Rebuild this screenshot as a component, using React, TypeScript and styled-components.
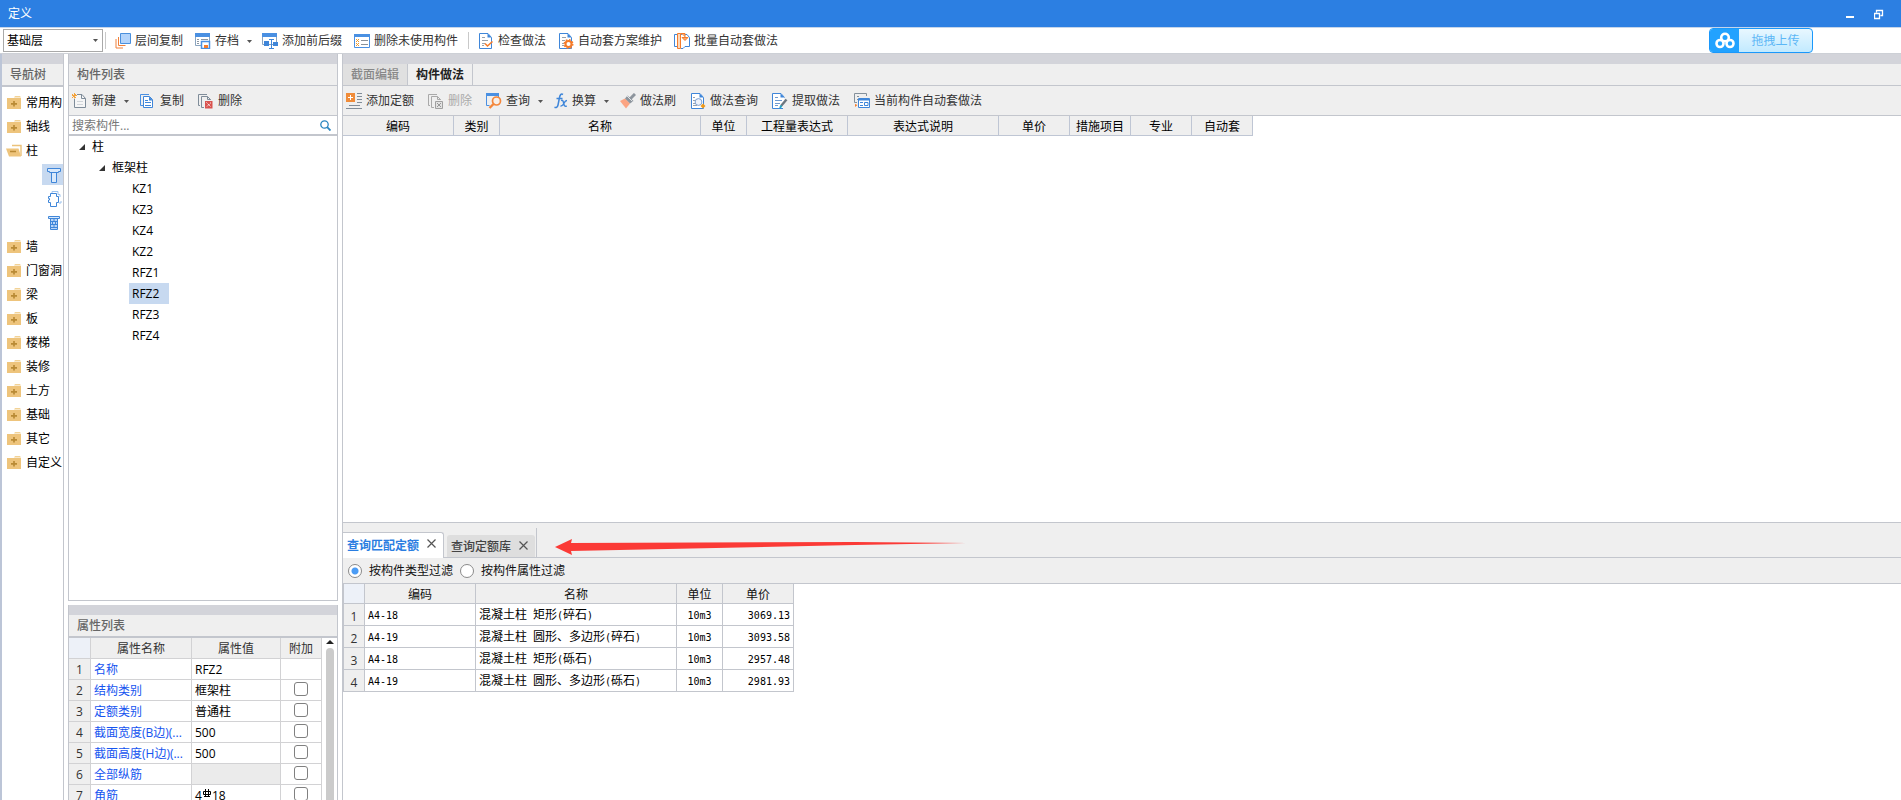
import React, { useState } from 'react';
import styled, { createGlobalStyle, css } from 'styled-components';

const line = '#c3c6cd';
const uiFont = '"Open Sans", "Noto Sans CJK SC", sans-serif';

const GlobalStyle = createGlobalStyle`
  * { box-sizing: border-box; }
  html, body, #root { height: 100%; }
  body {
    margin: 0;
    overflow: hidden;
    background: #fff;
    color: #111;
    font: 12px/16px ${uiFont};
  }
  button, input, select { font: inherit; color: inherit; }
  button { border: 0; margin: 0; padding: 0; background: none; white-space: nowrap; }
`;

/* ---------- layout ---------- */

const Page = styled.div`
  display: flex;
  flex-direction: column;
  height: 100vh;
`;

const TitleBar = styled.header`
  display: flex;
  align-items: center;
  justify-content: space-between;
  height: 28px;
  flex: none;
  padding: 0 13px 0 8px;
  background: #2c7fe2;
  border-bottom: 1px solid #c5d5ea;
  color: #fff;
`;

const WindowButtons = styled.div`
  display: flex;
  gap: 14px;
`;

const WindowButton = styled.button`
  display: flex;
  width: 14px;
  height: 14px;
`;

const TopToolbar = styled.div`
  display: flex;
  align-items: center;
  height: 26px;
  flex: none;
  padding: 0 88px 0 3px;
  background: #fff;
  border-bottom: 1px solid #cdd0d6;
`;

const Workspace = styled.div`
  display: flex;
  flex: 1;
  min-height: 0;
  border-left: 2px solid #bcc5d7;
`;

const NavPanel = styled.nav`
  width: 62px;
  flex: none;
  margin-right: 4px;
  border-right: 1px solid ${line};
  overflow: hidden;
`;

const SideColumn = styled.div`
  display: flex;
  flex-direction: column;
  width: 270px;
  flex: none;
  margin-right: 4px;
`;

const SidePanel = styled.section<{ $share: number }>`
  display: flex;
  flex-direction: column;
  flex: ${(p) => p.$share} 1 0;
  min-height: 0;
  overflow: hidden;
  border: 1px solid ${line};
  border-top: 0;
  & + & {
    margin-top: 4px;
    border-bottom: 0;
  }
`;

const MainColumn = styled.main`
  display: flex;
  flex-direction: column;
  flex: 1;
  min-width: 0;
  border-left: 1px solid ${line};
`;

const MainPane = styled.section<{ $share: number }>`
  display: flex;
  flex-direction: column;
  flex: ${(p) => p.$share} 1 0;
  min-height: 0;
  overflow: hidden;
`;

const Strip = styled.div`
  height: 10px;
  flex: none;
  background: #d3d4da;
`;

const PanelHeader = styled.h2<{ $rule: number }>`
  height: ${(p) => 21 + p.$rule}px;
  flex: none;
  margin: 0;
  padding: 0 8px;
  background: #efefef;
  border-bottom: ${(p) => p.$rule}px solid ${line};
  color: #666;
  font-size: 12px;
  font-weight: 500;
  line-height: 21px;
  white-space: nowrap;
`;

/* ---------- toolbars ---------- */

const FloorPicker = styled.div`
  position: relative;
  margin-right: 2px;
`;

const FloorSelect = styled.select`
  display: block;
  width: 100px;
  height: 23px;
  padding: 0 3px;
  appearance: none;
  background: #fff;
  border: 1px solid #a9a9a9;
  border-radius: 0;
  color: #000;
`;

const FloorCaret = styled.span`
  position: absolute;
  right: 5px;
  top: 10px;
  display: flex;
  pointer-events: none;
`;

const Divider = styled.i<{ $before?: number }>`
  width: 1px;
  height: 17px;
  margin: 0 3px 0 ${(p) => p.$before ?? 0}px;
  background: #c9c9c9;
`;

const ToolButton = styled.button<{ $pad: number; $menu?: boolean }>`
  display: flex;
  align-items: center;
  gap: 4px;
  height: 22px;
  padding: 0 ${(p) => (p.$menu ? 4 : p.$pad)}px 0 ${(p) => p.$pad}px;
  color: #333;
  &:disabled { color: #aaa; }
`;

const CaretSlot = styled.span`
  display: flex;
  padding: 2px 0 0 4px;
`;

const PanelToolbar = styled.div`
  display: flex;
  align-items: center;
  height: 30px;
  flex: none;
  background: #efefef;
  border-bottom: 1px solid ${line};
  > button:first-child { padding-left: 3px; }
`;

const UploadButton = styled.button`
  display: flex;
  width: 104px;
  height: 25px;
  margin-left: auto;
  overflow: hidden;
  border: 1px solid #1a98fb;
  border-radius: 4px;
  background: linear-gradient(#e8f7ff, #c2eaff);
  color: #5cb7f6;
  line-height: 23px;
`;

const UploadLogo = styled.span`
  display: flex;
  align-items: center;
  justify-content: center;
  width: 29px;
  height: 23px;
  background: #22a2ff;
`;

const UploadText = styled.span`
  flex: 1;
  text-align: center;
`;

/* ---------- navigation and tree ---------- */

const NavList = styled.ul`
  margin: 0;
  padding: 4px 0 0;
  list-style: none;
`;

const NavItem = styled.li`
  display: flex;
  flex-direction: column;
`;

const NavButton = styled.button`
  display: flex;
  align-items: center;
  gap: 4px;
  height: 24px;
  padding-left: 4px;
  color: #000;
`;

const NavTool = styled.button<{ $on?: boolean }>`
  display: flex;
  align-items: center;
  justify-content: center;
  width: 21px;
  height: 21px;
  margin: 1px 0 2px 40px;
  padding-left: 3px;
  background: ${(p) => (p.$on ? '#c7d9f0' : 'transparent')};
`;

const SearchRow = styled.label`
  display: flex;
  align-items: center;
  height: 20px;
  flex: none;
  padding: 0 6px 0 3px;
  border-bottom: 2px solid ${line};
`;

const SearchInput = styled.input`
  flex: 1;
  min-width: 0;
  height: 18px;
  padding: 0;
  border: 0;
  outline: 0;
  background: none;
  &::placeholder { color: #777; opacity: 1; }
`;

const TreeItem = styled.div<{ $indent: number }>`
  display: flex;
  align-items: center;
  height: 21px;
  padding-left: ${(p) => p.$indent}px;
`;

const TreeLabel = styled.button<{ $selected?: boolean; $leaf?: boolean }>`
  height: 21px;
  padding: 0 ${(p) => (p.$leaf ? 10 : 5)}px 0 ${(p) => (p.$leaf ? 3 : 7)}px;
  color: #000;
  background: ${(p) => (p.$selected ? '#c7d9f0' : 'transparent')};
`;

/* ---------- tables ---------- */

const Col = styled.col<{ $w: number }>`
  width: ${(p) => p.$w}px;
`;

const tableBase = css`
  table-layout: fixed;
  border-collapse: separate;
  border-spacing: 0;
  flex: none;
  align-self: flex-start;
  th, td {
    padding: 2px 0 0;
    overflow: hidden;
    white-space: nowrap;
    font-weight: 400;
    border-right: 1px solid ${line};
    border-bottom: 1px solid ${line};
  }
  thead th { background: #efefef; text-align: center; }
`;

const MethodTable = styled.table`
  ${tableBase}
  width: 910px;
  th { height: 20px; border-color: #bfc6d4; color: #000; }
`;

const QuotaTable = styled.table`
  ${tableBase}
  width: 451px;
  border-left: 1px solid ${line};
  thead th { height: 20px; color: #111; }
  thead th:first-child { background: #edf1f8; }
  tbody th { background: #efefef; color: #333; padding-top: 4px; }
  td, tbody th { height: 22px; }
  td { padding: 2px 3px 0; color: #000; }
`;

const PropertyTable = styled.table`
  ${tableBase}
  width: 253px;
  th, td { height: 21px; border-color: #d2d2d4; }
  thead th { color: #333; }
  thead th:first-child { background: #edf1f8; }
  tbody th { background: #efefef; color: #333; }
  td { padding: 2px 3px 0; }
`;

const PropertyBody = styled.div`
  display: flex;
  flex: 1;
  min-height: 0;
`;

const NameCell = styled.td`
  color: #1554f0;
`;

const ValueCell = styled.td<{ $locked?: boolean }>`
  color: #000;
  background: ${(p) => (p.$locked ? '#ebebeb' : '#fff')};
`;

const CheckBox = styled.input`
  display: block;
  width: 14px;
  height: 14px;
  margin: 0 auto 4px;
  appearance: none;
  background: #fff;
  border: 1px solid #808080;
  border-radius: 3px;
  &:checked { background: #5aa2f5; }
`;

const ScrollTrack = styled.div`
  display: flex;
  flex-direction: column;
  align-items: center;
  gap: 4px;
  flex: 1;
  padding-top: 2px;
`;

const ScrollThumb = styled.div`
  width: 8px;
  flex: 1;
  border-radius: 4px 4px 0 0;
  background: #cbcbcb;
`;

const HalfWidth = styled.span`
  font: 10px/16px "DejaVu Sans Mono", monospace;
`;

const Cell = styled.td<{ $align?: string }>`
  text-align: ${(p) => p.$align ?? 'left'};
`;

/* ---------- tabs ---------- */

const TabBar = styled.div`
  display: flex;
  height: 22px;
  flex: none;
  background: #efefef;
  border-bottom: 1px solid ${line};
`;

const Tab = styled.button<{ $active?: boolean }>`
  width: 65px;
  border-right: 1px solid ${line};
  background: ${(p) => (p.$active ? '#efefef' : '#e0e0e0')};
  color: ${(p) => (p.$active ? '#222' : '#888')};
  font-weight: ${(p) => (p.$active ? 700 : 500)};
`;

const QueryTabBar = styled.div`
  position: relative;
  display: flex;
  align-items: flex-end;
  height: 36px;
  flex: none;
  background: #efefef;
  border-top: 1px solid ${line};
`;

const QueryTab = styled.div<{ $active?: boolean }>`
  display: flex;
  align-items: center;
  justify-content: space-between;
  flex: none;
  ${(p) =>
    p.$active
      ? css`
          width: 101px;
          height: 26px;
          padding: 0 7px 0 4px;
          background: #fff;
          border: 1px solid ${line};
          border-width: 1px 1px 0 0;
          border-radius: 0 3px 0 0;
          color: #2a7de1;
          font-weight: 700;
        `
      : css`
          width: 88px;
          height: 22px;
          padding: 2px 7px 0 4px;
          background: #dedede;
          border-radius: 3px 3px 0 0;
          color: #444;
          font-weight: 500;
        `}
`;

const InactiveTabs = styled.div`
  display: flex;
  align-items: flex-end;
  height: 30px;
  padding: 0 1px 0 3px;
  border-right: 1px solid ${line};
  border-bottom: 1px solid ${line};
`;

const TabFill = styled.div`
  flex: 1;
  height: 30px;
  border-bottom: 1px solid ${line};
`;

const CloseButton = styled.button`
  display: flex;
  padding-bottom: 4px;
`;

const Annotation = styled.svg`
  position: absolute;
  left: 212px;
  top: 14px;
  pointer-events: none;
`;

const FilterRow = styled.div`
  display: flex;
  align-items: center;
  gap: 7px;
  height: 26px;
  flex: none;
  padding-left: 5px;
  background: #efefef;
  border-bottom: 1px solid ${line};
  color: #111;
`;

const FilterOption = styled.label`
  display: flex;
  align-items: center;
  gap: 7px;
`;

const Radio = styled.input`
  width: 14px;
  height: 14px;
  margin: 0;
  appearance: none;
  border: 1px solid #8a8a8a;
  border-radius: 50%;
  background: #fff;
  &:checked { background: radial-gradient(circle, #4b9cf5 3px, #fff 4px); }
`;

/* ---------- icons ---------- */

const Svg = ({ children, w = 16, h = 16 }: { children: React.ReactNode; w?: number; h?: number }) => (
  <svg width={w} height={h} viewBox={`0 0 ${w} ${h}`} fill="none" aria-hidden="true">
    {children}
  </svg>
);

const Caret = () => (
  <Svg w={5} h={3}><path d="M0 0h5L2.500 3z" fill="#555" /></Svg>
);

const docPath = 'M1.500.5h8.500l3.500 4v11h-12z';

const icons: Record<string, React.ReactNode> = {
  layers: (
    <Svg>
      <path d="M1 6v9h7" stroke="#f0803a" />
      <path d="M3.500 4v8.500h7" stroke="#f0803a" />
      <path d="M5.500.5h10v10h-10z" fill="#b3d4fb" stroke="#4a90dd" />
    </Svg>
  ),
  archive: (
    <Svg>
      <path d="M.5 1h14v11.500h-14z" fill="#fff" stroke="#8aa4bf" />
      <path d="M0 0h15v4H0z" fill="#4a90e2" />
      <path d="M2 6.500h2M2 8.500h2M2 10.500h2M6 6.500h7" stroke="#8b97a3" />
      <path d="M6.500 8.500h8v7h-8z" fill="#fff" stroke="#4a90e2" strokeWidth="1.500" />
      <path d="M9 12h4v3H9z" fill="#f57c2b" />
    </Svg>
  ),
  affix: (
    <Svg>
      <path d="M.5 1h14v10.500h-14z" fill="#fff" stroke="#8aa4bf" />
      <path d="M0 0h15v4H0z" fill="#4a90e2" />
      <path d="M2 8h5v5H2zM11 9h5v4h-5z" fill="#3f86d9" />
      <path d="M9.500 7v8.500M7 6.500h5M7 15.500h5" stroke="#3f86d9" />
    </Svg>
  ),
  unused: (
    <Svg>
      <path d="M.5 1.500h15v13H.5z" fill="#fff" stroke="#4a90e2" />
      <path d="M0 1h16v3H0z" fill="#4a90e2" />
      <path d="M2 6l3 3M5 6L2 9M2 10l3 3M5 10l-3 3" stroke="#ef9a2c" />
      <path d="M7 7.500h7M7 11.500h7" stroke="#8a9199" />
    </Svg>
  ),
  check: (
    <Svg>
      <path d={docPath} fill="#fff" stroke="#3f86d9" />
      <path d="M9.500.5v4h4z" fill="#3f86d9" />
      <path d="M4 4.500h3M4 7.500h6M4 10.500h3M4 12.500h2" stroke="#98a2ad" />
      <path d="M7 10.500l2.500 2.500L14.500 8.500" stroke="#f57c2b" strokeWidth="1.600" />
    </Svg>
  ),
  plan: (
    <Svg>
      <path d={docPath} fill="#fff" stroke="#3f86d9" />
      <path d="M9.500.5v4h4z" fill="#3f86d9" />
      <path d="M4 4.500h4M4 7.500h3M4 10.500h2M4 12.500h2" stroke="#98a2ad" />
      <circle cx="10.500" cy="11" r="3" fill="#fff" stroke="#f57c2b" strokeWidth="2" />
      <circle cx="10.500" cy="11" r="4.300" stroke="#f57c2b" strokeWidth="1.400" strokeDasharray="1.700 1.677" />
    </Svg>
  ),
  batch: (
    <Svg>
      <path d="M3.500 1.500h-3v12h3M5 1.500h8l2.500 3V13.500H11l-2 2H7" fill="#fff" stroke="#3f86d9" />
      <path d="M3.500.5h3v15h-3z" fill="#fbd9bd" stroke="#f57c2b" />
      <path d="M6.500.5h4.500V4M8 4.500l3 3 3-3z" stroke="#f57c2b" fill="#f9a86f" />
    </Svg>
  ),
  create: (
    <Svg>
      <path d="M5 1.500h5l3.500 4v9h-11V6" fill="#f6f6f6" stroke="#7f8c99" />
      <path d="M9.500 1.500v4h4" stroke="#7f8c99" />
      <path d="M5 8.500h6M5 11.500h6" stroke="#d0d4d8" />
      <path d="M0 1l4 4M4 1L0 5M2.500 0v5.500M0 2.500h5" stroke="#f3a23a" />
    </Svg>
  ),
  copy: (
    <Svg>
      <path d="M3 12.500H.5V1.500H9" stroke="#4a90e2" />
      <path d="M3.500 3.500h6l3 3v8h-9z" fill="#fff" stroke="#3f86d9" />
      <path d="M9 3.500v4h4z" fill="#3f86d9" />
      <path d="M5 7.500h3M5 9.500h6M5 12.500h6" stroke="#3f86d9" />
    </Svg>
  ),
  remove: (
    <Svg>
      <path d="M2 12.500H.5V1.500H9" stroke="#7f8c99" />
      <path d="M6 14.500H3.500v-11h6l3 3V7M9.500 3.500v3h3" stroke="#7f8c99" />
      <path d="M7 8h7.500v7.500H7z" fill="#d9534f" />
      <path d="M8.500 9.500l4.500 4.500M13 9.500L8.500 14" stroke="#fff" strokeDasharray="1.200 .8" />
    </Svg>
  ),
  removeOff: (
    <Svg>
      <path d="M2 12.500H.5V1.500H9" stroke="#a9a9a9" />
      <path d="M6 14.500H3.500v-11h6l3 3V7M9.500 3.500v3h3" stroke="#a9a9a9" />
      <path d="M7.500 8.500h7v7h-7z" fill="#e2e2e2" stroke="#a0a0a0" />
      <path d="M9 10l4 4M13 10l-4 4" stroke="#999" />
    </Svg>
  ),
  addQuota: (
    <Svg>
      <path d="M0 0h9v9H0z" fill="#f08c3a" />
      <path d="M4.500 2v5M2 4.500h5" stroke="#fff" />
      <path d="M11 .5h5M11 3.500h5M11 6.500h5M11 9.500h5M3 12.500h11M0 15.500h16" stroke="#808d99" />
    </Svg>
  ),
  query: (
    <Svg>
      <path d="M.5 1v11.500h3M12.500 1v3" stroke="#4a90e2" />
      <path d="M0 0h13v3H0z" fill="#4a90e2" />
      <circle cx="10.500" cy="8" r="4" stroke="#f4863a" strokeWidth="1.700" fill="#f7efe8" />
      <path d="M7.500 11l-4 4" stroke="#f4863a" strokeWidth="2.400" />
    </Svg>
  ),
  convert: (
    <Svg w={14}>
      <path d="M9 1.500C7 .3 6 2 5.500 4.500L4 12c-.4 2-1.500 3-3.500 2.300M2.500 5.500h6" stroke="#3f86d9" strokeWidth="1.500" />
      <path d="M7 7.500c2-.8 2.300 1 2.700 3s1 3.500 3 2.500M13 7.500c-2 0-2.600 2-3.500 3.500s-1.500 2.300-3 2" stroke="#3f86d9" strokeWidth="1.400" />
    </Svg>
  ),
  brush: (
    <Svg>
      <path d="M0 8l5-2.500 5 5L6 15.500z" fill="#fba482" />
      <path d="M5 5.500l2.500-3 6 5.500-3.500 2.500z" fill="#8d959d" />
      <path d="M10 6l5-5" stroke="#8d959d" strokeWidth="3" />
      <path d="M7 3l5.500 5.500" stroke="#dfe3e6" />
    </Svg>
  ),
  methodQuery: (
    <Svg>
      <path d={docPath} fill="#fff" stroke="#3f86d9" />
      <path d="M9.500.5v4h4z" fill="#3f86d9" />
      <path d="M3 4.500h2M3 7.500h2M3 10.500h2M3 12.500h4" stroke="#98a2ad" />
      <circle cx="8.500" cy="9" r="3.400" stroke="#7c9fd0" fill="#eef3fb" />
      <path d="M13 10.500l2.500 2.500-2.500 2.500-2.500-2.500z" fill="#f09a1a" />
    </Svg>
  ),
  extract: (
    <Svg>
      <path d="M11 15.500H.5V.5h8.500l3.500 4" fill="#fff" stroke="#3f86d9" />
      <path d="M8.500.5v4h4z" fill="#3f86d9" />
      <path d="M3 4.500h3M3 7.500h7M3 10.500h5M3 12.500h3" stroke="#6f9bd0" />
      <path d="M14.500 6.500L9 13" stroke="#6d7780" strokeWidth="2.400" />
      <path d="M8 15l1.500-2.500" stroke="#25a5c4" strokeWidth="2" />
    </Svg>
  ),
  autoApply: (
    <Svg>
      <path d="M3 9.500H.5V.5h12V3M3 3.500h2M3 6.500h1" stroke="#84909b" />
      <path d="M1 11l2.500 1L1 14z" fill="#f57c2b" />
      <path d="M4.500 5.500h11v9h-11z" fill="#fff" stroke="#3f86d9" />
      <path d="M5 6.500h10" stroke="#3f86d9" strokeWidth="2" />
      <path d="M6 9.500h3M6 12.500h3M10.500 9.500h3.500v3h-3.500z" stroke="#3f86d9" />
    </Svg>
  ),
};

const FolderIcon = ({ open }: { open?: boolean }) =>
  open ? (
    <Svg>
      <path d="M6 2.500h9V13" stroke="#ecc27a" strokeWidth="1.400" />
      <path d="M0 5.500h12.500l2.500 8H3z" fill="#eec47c" />
      <path d="M4 8.500h6" stroke="#b98a35" strokeWidth="1.500" />
    </Svg>
  ) : (
    <Svg>
      <path d="M8 2.500L9 1h5l1 1.500z" fill="#f2d296" />
      <path d="M1 3h14v11H1z" fill="#eec47c" />
      <path d="M8 6v5.500M5 8.800h6" stroke="#b98a35" strokeWidth="1.700" />
    </Svg>
  );

const navTools = [
  <Svg key="column">
    <path d="M1.500 1.500h13v3h-2v1h-9v-1h-2zM5.500 5.500h5v10h-5z" fill="#d9e9fb" stroke="#3f86d9" />
  </Svg>,
  <Svg key="structural">
    <path d="M6 2.500V.5h6v3h2V6M15 10v2h-2" stroke="#9cc2ee" />
    <path d="M4.500 2.500h6v3h2v6h-2v4h-6v-4h-2V9h1V7.500h-1v-2h2z" fill="#fff" stroke="#3f86d9" />
  </Svg>,
  <Svg key="masonry">
    <path d="M2.500 1.500h11v2h-11z" fill="#d9e9fb" stroke="#3f86d9" />
    <path d="M4.500 4v10.500h7V4M4.500 6.500h7M4.500 9.500h7M4.500 12.500h7M8 4v2.500M6.500 6.500v3M9.500 6.500v3M8 9.500v3" fill="#b9d5f6" stroke="#3f86d9" />
  </Svg>,
];

const CloseIcon = () => (
  <Svg w={9} h={9}><path d="M.5.5l8 8M8.500.5l-8 8" stroke="#555" strokeWidth="1.200" /></Svg>
);

const RebarMark = () => (
  <svg width="10" height="12" viewBox="0 0 10 12" fill="none" role="img" aria-label="钢筋直径">
    <path d="M1.500 3.500h7v3h-7zM3.500 1v8M6.500 1v8M2 8.500h6" stroke="#000" />
  </svg>
);

/* ---------- data ---------- */

type Tool = { icon: string; label: string; menu?: boolean; off?: boolean };

const fileTools: Tool[] = [
  { icon: 'layers', label: '层间复制' },
  { icon: 'archive', label: '存档', menu: true },
  { icon: 'affix', label: '添加前后缀' },
  { icon: 'unused', label: '删除未使用构件' },
];
const autoTools: Tool[] = [
  { icon: 'check', label: '检查做法' },
  { icon: 'plan', label: '自动套方案维护' },
  { icon: 'batch', label: '批量自动套做法' },
];
const listTools: Tool[] = [
  { icon: 'create', label: '新建', menu: true },
  { icon: 'copy', label: '复制' },
  { icon: 'remove', label: '删除' },
];
const methodTools: Tool[] = [
  { icon: 'addQuota', label: '添加定额' },
  { icon: 'removeOff', label: '删除', off: true },
  { icon: 'query', label: '查询', menu: true },
  { icon: 'convert', label: '换算', menu: true },
  { icon: 'brush', label: '做法刷' },
  { icon: 'methodQuery', label: '做法查询' },
  { icon: 'extract', label: '提取做法' },
  { icon: 'autoApply', label: '当前构件自动套做法' },
];

const navItems = ['常用构', '轴线', '柱', '墙', '门窗洞', '梁', '板', '楼梯', '装修', '土方', '基础', '其它', '自定义'];
const members = ['KZ1', 'KZ3', 'KZ4', 'KZ2', 'RFZ1', 'RFZ2', 'RFZ3', 'RFZ4'];

const methodColumns: [string, number][] = [
  ['编码', 111], ['类别', 46], ['名称', 201], ['单位', 46], ['工程量表达式', 101],
  ['表达式说明', 151], ['单价', 71], ['措施项目', 61], ['专业', 61], ['自动套', 61],
];

const properties: { name: string; value: React.ReactNode; check?: boolean; locked?: boolean }[] = [
  { name: '名称', value: 'RFZ2' },
  { name: '结构类别', value: '框架柱', check: true },
  { name: '定额类别', value: '普通柱', check: true },
  { name: '截面宽度(B边)(...', value: '500', check: true },
  { name: '截面高度(H边)(...', value: '500', check: true },
  { name: '全部纵筋', value: '', check: true, locked: true },
  { name: '角筋', value: <>4<RebarMark />18</>, check: true },
];

const quotas = [
  ['A4-18', '混凝土柱 矩形(碎石)', '10m3', '3069.13'],
  ['A4-19', '混凝土柱 圆形、多边形(碎石)', '10m3', '3093.58'],
  ['A4-18', '混凝土柱 矩形(砾石)', '10m3', '2957.48'],
  ['A4-19', '混凝土柱 圆形、多边形(砾石)', '10m3', '2981.93'],
];

/* ---------- components ---------- */

const Tools = ({ items, pad = 6 }: { items: Tool[]; pad?: number }) => (
  <>
    {items.map((t) => (
      <ToolButton key={t.label} $pad={pad} $menu={t.menu} disabled={t.off}>
        {icons[t.icon]}
        {t.label}
        {t.menu && <CaretSlot><Caret /></CaretSlot>}
      </ToolButton>
    ))}
  </>
);

/* Latin runs take half the width of a Chinese character. */
const GridText = ({ text }: { text: string }) => (
  <>
    {text.split(/([\x20-\x7e]+)/).map((part, i) => (i % 2 ? <HalfWidth key={i}>{part}</HalfWidth> : part))}
  </>
);

const Expander = () => (
  <Svg w={6} h={6}><path d="M6 0v6H0z" fill="#333" /></Svg>
);

export default function App() {
  const [selected, setSelected] = useState('RFZ2');
  const [filter, setFilter] = useState('type');

  return (
    <Page>
      <GlobalStyle />
      <TitleBar>
        <span>定义</span>
        <WindowButtons>
          <WindowButton aria-label="最小化">
            <Svg w={14} h={14}><path d="M0 10h8" stroke="#fff" strokeWidth="2" /></Svg>
          </WindowButton>
          <WindowButton aria-label="还原">
            <Svg w={14} h={14}>
              <path d="M2.500 5.500v-2h6v5h-2M.5 6.500h5v5h-5zM2 3.500h7M0 6.500h6" stroke="#fff" strokeWidth="1.300" />
            </Svg>
          </WindowButton>
        </WindowButtons>
      </TitleBar>

      <TopToolbar>
        <FloorPicker>
          <FloorSelect aria-label="楼层"><option>基础层</option></FloorSelect>
          <FloorCaret><Caret /></FloorCaret>
        </FloorPicker>
        <Divider />
        <Tools items={fileTools} />
        <Divider $before={4} />
        <Tools items={autoTools} />
        <UploadButton>
          <UploadLogo>
            <Svg w={20} h={18}>
              <circle cx="10" cy="5.500" r="3.800" stroke="#fff" strokeWidth="2.600" />
              <circle cx="5" cy="11.500" r="3.500" stroke="#fff" strokeWidth="2.600" />
              <circle cx="15" cy="11.500" r="3.500" stroke="#fff" strokeWidth="2.600" />
            </Svg>
          </UploadLogo>
          <UploadText>拖拽上传</UploadText>
        </UploadButton>
      </TopToolbar>

      <Workspace>
        <NavPanel>
          <Strip />
          <PanelHeader $rule={2}>导航树</PanelHeader>
          <NavList>
            {navItems.map((item) => (
              <NavItem key={item}>
                <NavButton>
                  <FolderIcon open={item === '柱'} />
                  {item}
                </NavButton>
                {item === '柱' &&
                  navTools.map((tool, i) => (
                    <NavTool key={i} $on={i === 0} aria-label={['框架柱', '构造柱', '砌体柱'][i]}>{tool}</NavTool>
                  ))}
              </NavItem>
            ))}
          </NavList>
        </NavPanel>

        <SideColumn>
          <SidePanel $share={547}>
            <Strip />
            <PanelHeader $rule={1}>构件列表</PanelHeader>
            <PanelToolbar>
              <Tools items={listTools} pad={7} />
            </PanelToolbar>
            <SearchRow>
              <SearchInput placeholder="搜索构件..." aria-label="搜索构件" />
              <Svg w={11} h={11}>
                <circle cx="4.500" cy="4.500" r="3.700" stroke="#2a86c0" strokeWidth="1.300" />
                <path d="M7.200 7.200l3.300 3.300" stroke="#2a86c0" strokeWidth="1.800" />
              </Svg>
            </SearchRow>
            <TreeItem $indent={10}><Expander /><TreeLabel>柱</TreeLabel></TreeItem>
            <TreeItem $indent={30}><Expander /><TreeLabel>框架柱</TreeLabel></TreeItem>
            {members.map((m) => (
              <TreeItem key={m} $indent={60}>
                <TreeLabel $leaf $selected={m === selected} onClick={() => setSelected(m)}>{m}</TreeLabel>
              </TreeItem>
            ))}
          </SidePanel>

          <SidePanel $share={195}>
            <Strip />
            <PanelHeader $rule={2}>属性列表</PanelHeader>
            <PropertyBody>
              <PropertyTable>
                <colgroup><Col $w={22} /><Col $w={101} /><Col $w={89} /><Col $w={41} /></colgroup>
                <thead>
                  <tr><th aria-label="序号" /><th>属性名称</th><th>属性值</th><th>附加</th></tr>
                </thead>
                <tbody>
                  {properties.map((p, i) => (
                    <tr key={p.name}>
                      <th>{i + 1}</th>
                      <NameCell>{p.name}</NameCell>
                      <ValueCell $locked={p.locked}>{p.value}</ValueCell>
                      <td>{p.check && <CheckBox type="checkbox" aria-label={p.name} />}</td>
                    </tr>
                  ))}
                </tbody>
              </PropertyTable>
              <ScrollTrack>
                <Svg w={8} h={4}><path d="M0 4L4 0l4 4z" fill="#222" /></Svg>
                <ScrollThumb />
              </ScrollTrack>
            </PropertyBody>
          </SidePanel>
        </SideColumn>

        <MainColumn>
          <MainPane $share={468}>
            <Strip />
            <TabBar>
              <Tab>截面编辑</Tab>
              <Tab $active>构件做法</Tab>
            </TabBar>
            <PanelToolbar>
              <Tools items={methodTools} pad={7} />
            </PanelToolbar>
            <MethodTable>
              <colgroup>{methodColumns.map(([n, w]) => <Col key={n} $w={w} />)}</colgroup>
              <thead><tr>{methodColumns.map(([n]) => <th key={n}>{n}</th>)}</tr></thead>
            </MethodTable>
          </MainPane>

          <MainPane $share={278}>
            <QueryTabBar>
              <QueryTab $active>
                查询匹配定额
                <CloseButton aria-label="关闭查询匹配定额"><CloseIcon /></CloseButton>
              </QueryTab>
              <InactiveTabs>
                <QueryTab>
                  查询定额库
                  <CloseButton aria-label="关闭查询定额库"><CloseIcon /></CloseButton>
                </QueryTab>
              </InactiveTabs>
              <TabFill />
              <Annotation width="412" height="20" viewBox="0 0 412 20" aria-hidden="true">
                <path d="M0 10L17 2l-1 4L300 5l111 1-111 2L16 14l1 4z" fill="#fb3a36" />
              </Annotation>
            </QueryTabBar>
            <FilterRow>
              <FilterOption>
                <Radio type="radio" name="filter" checked={filter === 'type'} onChange={() => setFilter('type')} />
                按构件类型过滤
              </FilterOption>
              <FilterOption>
                <Radio type="radio" name="filter" checked={filter === 'attr'} onChange={() => setFilter('attr')} />
                按构件属性过滤
              </FilterOption>
            </FilterRow>
            <QuotaTable>
              <colgroup><Col $w={21} /><Col $w={111} /><Col $w={201} /><Col $w={46} /><Col $w={71} /></colgroup>
              <thead>
                <tr><th aria-label="序号" /><th>编码</th><th>名称</th><th>单位</th><th>单价</th></tr>
              </thead>
              <tbody>
                {quotas.map(([code, name, unit, price], i) => (
                  <tr key={i}>
                    <th>{i + 1}</th>
                    <Cell><GridText text={code} /></Cell>
                    <Cell><GridText text={name} /></Cell>
                    <Cell $align="center"><GridText text={unit} /></Cell>
                    <Cell $align="right"><GridText text={price} /></Cell>
                  </tr>
                ))}
              </tbody>
            </QuotaTable>
          </MainPane>
        </MainColumn>
      </Workspace>
    </Page>
  );
}
